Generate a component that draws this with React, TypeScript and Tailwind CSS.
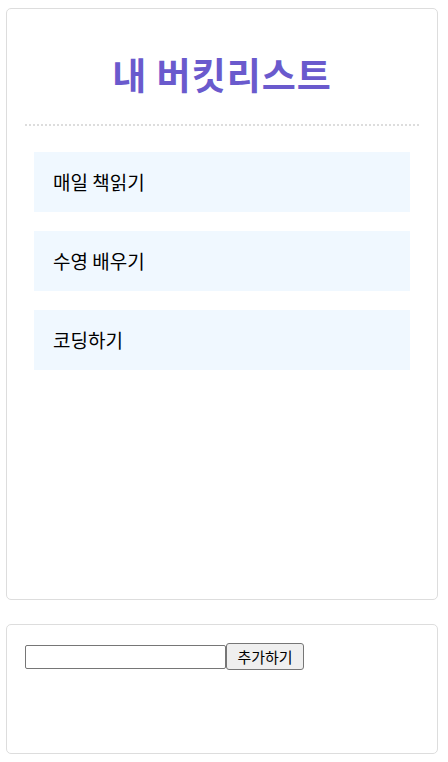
export default function App() {
  const items = ["매일 책읽기", "수영 배우기", "코딩하기"];
  return (
    <div
      className="w-[448px] pt-[8px] pl-[6px]"
      style={{ fontFamily: '"Noto Sans CJK KR", "Noto Sans", sans-serif' }}
    >
      <div className="w-[432px] h-[592px] border border-[#dddddd] rounded-[5px] bg-white px-[18px] flex flex-col">
        <div className="h-[115px] flex items-center justify-center">
          <h1 className="text-[37px] leading-none font-bold text-[#6a5acd] pt-[16px] tracking-[1px]">내 버킷리스트</h1>
        </div>
        <div className="border-t-2 border-dotted border-[#dddddd]" />
        <div className="mx-[9px] mt-[26px] flex flex-col gap-[19px]">
          {items.map((t) => (
            <div key={t} className="h-[60px] bg-[#f0f8ff] flex items-center pl-[19px] text-[19px] text-black">
              {t}
            </div>
          ))}
        </div>
      </div>
      <div className="mt-[24px] w-[432px] h-[130px] border border-[#dddddd] rounded-[5px] bg-white px-[18px] pt-[18px]">
        <div className="flex items-center">
          <input
            type="text"
            className="w-[201px] h-[24px] border border-[#767676] rounded-[2px] bg-white px-[2px] text-[13px]"
          />
          <button className="w-[78px] h-[27px] border border-[#767676] rounded-[3px] bg-[#efefef] text-[15px] text-black leading-none">
            추가하기
          </button>
        </div>
      </div>
    </div>
  );
}
